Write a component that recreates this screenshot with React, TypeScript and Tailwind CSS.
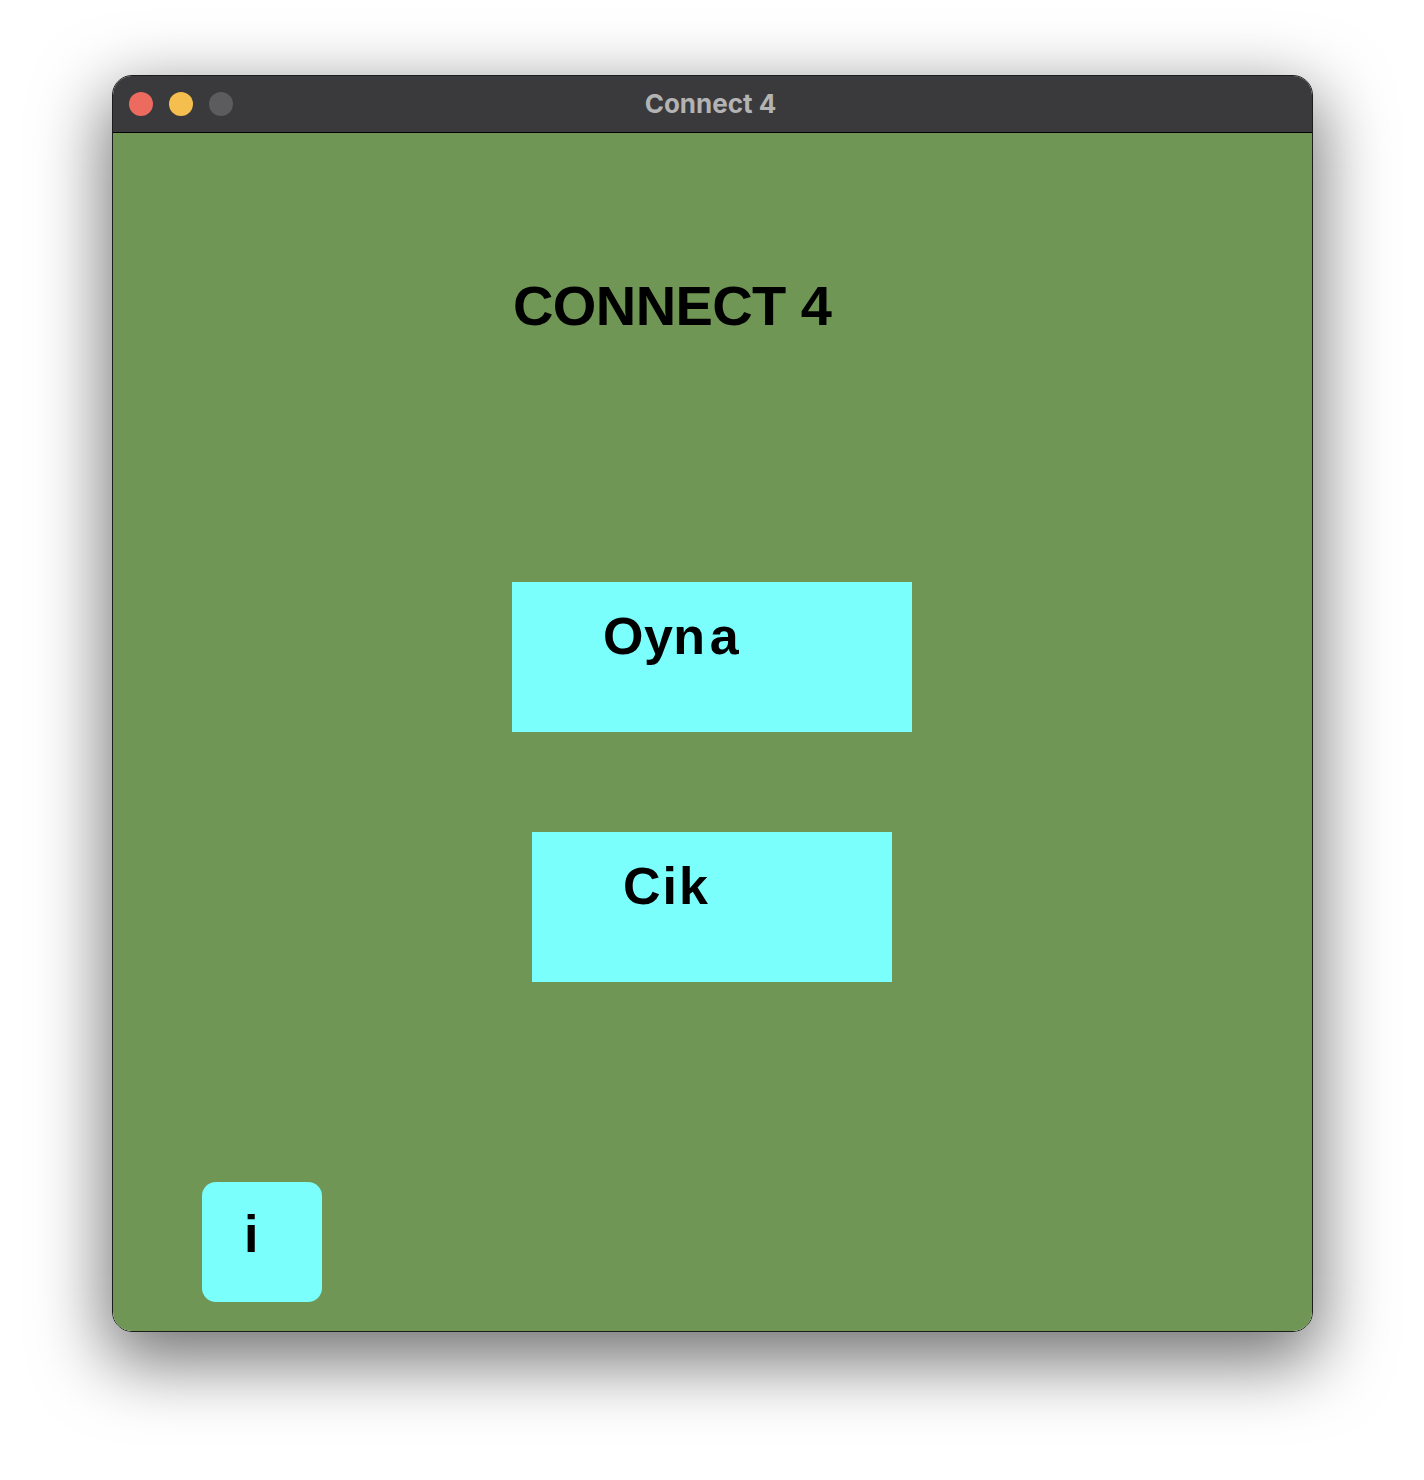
const CYAN = "bg-[#7bfffc]";

function TrafficLights() {
  return (
    <div className="flex items-center gap-4 pl-[16px]">
      <span className="w-6 h-6 rounded-full bg-[#ec6a5e]" />
      <span className="w-6 h-6 rounded-full bg-[#f4bf4f]" />
      <span className="w-6 h-6 rounded-full bg-[#5c5c5f]" />
    </div>
  );
}

export default function App() {
  return (
    <div className="w-[1424px] h-[1480px] bg-white pt-[75px] pl-[112px] font-['Liberation_Sans',Arial,sans-serif]">
      <div className="w-[1201px] rounded-[20px] overflow-hidden border border-[#1c1c1c] shadow-[0_24px_70px_6px_rgba(0,0,0,0.55)]">
        {/* title bar */}
        <div className="relative h-[57px] bg-[#3a3a3c] border-b border-black flex items-center">
          <TrafficLights />
          <div className="absolute inset-0 flex items-center justify-center pb-[2px] pr-[4px] text-[26px] font-bold text-[#b3b3b3] font-['Inter',sans-serif]">
            Connect 4
          </div>
        </div>

        {/* game surface */}
        <div className="h-[1198px] bg-[#6f9655] flex flex-col items-start">
          <h1 className="mt-[145px] ml-[400px] text-[56px] leading-none font-bold text-black tracking-[-0.6px]">
            CONNECT 4
          </h1>

          <button
            className={`mt-[248px] ml-[399px] w-[400px] h-[150px] ${CYAN} text-left pl-[91px] pt-[28px] flex items-start`}
          >
            <span className="text-[52px] leading-none font-bold text-black tracking-[0.5px]">
              Oyn<span className="ml-[4px]">a</span>
            </span>
          </button>

          <button
            className={`mt-[100px] ml-[419px] w-[360px] h-[150px] ${CYAN} text-left pl-[91px] pt-[28px] flex items-start`}
          >
            <span className="text-[52px] leading-none font-bold text-black tracking-[2px]">Cik</span>
          </button>

          <button
            className={`mt-[200px] ml-[89px] w-[120px] h-[120px] rounded-[14px] ${CYAN} text-left pl-[42px] pt-[26px] flex items-start`}
          >
            <span className="text-[52px] leading-none font-bold text-black">i</span>
          </button>
        </div>
      </div>
    </div>
  );
}
